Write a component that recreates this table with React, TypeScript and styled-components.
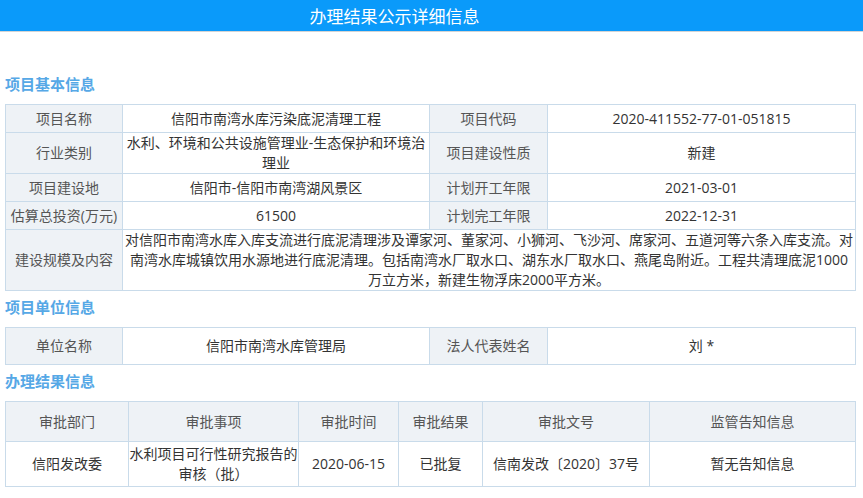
import React from "react";
import styled, { createGlobalStyle } from "styled-components";

const Global = createGlobalStyle`
  html, body { margin: 0; padding: 0; background: #fff; }
  body { font-family: "Open Sans", "Noto Sans CJK SC", sans-serif; }
`;

const Page = styled.div`
  width: 863px;
  overflow: hidden;
`;

const TopBar = styled.div`
  height: 31px;
  background: #0a9afa;
  border-bottom: 1px solid #d4d4d4;
  display: flex;
  align-items: center;
  justify-content: center;
  padding-right: 74px;
  color: #fff;
  font-family: "Noto Sans CJK SC", sans-serif;
  font-size: 17px;
  line-height: 31px;
`;

const Content = styled.div`
  padding: 42px 0 0 5px;
`;

const SectionTitle = styled.div<{ $first?: boolean }>`
  height: 20px;
  line-height: 20px;
  font-family: "Noto Sans CJK SC", sans-serif;
  font-size: 15px;
  font-weight: bold;
  color: #56a8e6;
  margin: ${(p) => (p.$first ? "0" : "6px")} 0 10px 0;
`;

const Table = styled.table`
  width: 850px;
  border-collapse: collapse;
  table-layout: fixed;
  font-size: 14px;
  line-height: 20px;
`;

const Cell = styled.td<{ $label?: boolean; $h?: number; $pad?: number }>`
  border: 1px solid #c9dbea;
  background: ${(p) => (p.$label ? "#eef2f6" : "#fff")};
  color: ${(p) => (p.$label ? "#555" : "#333")};
  text-align: center;
  vertical-align: middle;
  height: ${(p) => p.$h ?? 28}px;
  padding: ${(p) => p.$pad ?? 0}px 1px;
  box-sizing: border-box;
`;

const HeadCell = styled(Cell).attrs({ as: "th" })`
  font-weight: normal;
  padding: 0;
`;

const ResultCell = styled(Cell)`
  padding: 2px 0;
`;

const basicRows: [string, string, string, string][] = [
  ["项目名称", "信阳市南湾水库污染底泥清理工程", "项目代码", "2020-411552-77-01-051815"],
  ["行业类别", "水利、环境和公共设施管理业-生态保护和环境治理业", "项目建设性质", "新建"],
  ["项目建设地", "信阳市-信阳市南湾湖风景区", "计划开工年限", "2021-03-01"],
  ["估算总投资(万元)", "61500", "计划完工年限", "2022-12-31"],
];

const resultHead = ["审批部门", "审批事项", "审批时间", "审批结果", "审批文号", "监管告知信息"];
const resultRow = ["信阳发改委", "水利项目可行性研究报告的审核（批）", "2020-06-15", "已批复", "信南发改〔2020〕37号", "暂无告知信息"];
const resultCols = [123, 170, 100, 84, 167, 206];
const infoCols = [117, 307, 118, 308];

export default function App() {
  return (
    <Page>
      <Global />
      <TopBar>办理结果公示详细信息</TopBar>
      <Content>
        <SectionTitle $first>项目基本信息</SectionTitle>
        <Table>
          <colgroup>
            {infoCols.map((w, i) => (
              <col key={i} style={{ width: w }} />
            ))}
          </colgroup>
          <tbody>
            {basicRows.map((r) => (
              <tr key={r[0]}>
                <Cell $label>{r[0]}</Cell>
                <Cell>{r[1]}</Cell>
                <Cell $label>{r[2]}</Cell>
                <Cell>{r[3]}</Cell>
              </tr>
            ))}
            <tr>
              <Cell $label>建设规模及内容</Cell>
              <Cell colSpan={3}>
                对信阳市南湾水库入库支流进行底泥清理涉及谭家河、董家河、小狮河、飞沙河、席家河、五道河等六条入库支流。对南湾水库城镇饮用水源地进行底泥清理。包括南湾水厂取水口、湖东水厂取水口、燕尾岛附近。工程共清理底泥1000万立方米，新建生物浮床2000平方米。
              </Cell>
            </tr>
          </tbody>
        </Table>

        <SectionTitle>项目单位信息</SectionTitle>
        <Table>
          <colgroup>
            {infoCols.map((w, i) => (
              <col key={i} style={{ width: w }} />
            ))}
          </colgroup>
          <tbody>
            <tr>
              <Cell $label $h={37}>单位名称</Cell>
              <Cell $h={37}>信阳市南湾水库管理局</Cell>
              <Cell $label $h={37}>法人代表姓名</Cell>
              <Cell $h={37}>刘 *</Cell>
            </tr>
          </tbody>
        </Table>

        <SectionTitle>办理结果信息</SectionTitle>
        <Table>
          <colgroup>
            {resultCols.map((w, i) => (
              <col key={i} style={{ width: w }} />
            ))}
          </colgroup>
          <thead>
            <tr>
              {resultHead.map((h) => (
                <HeadCell key={h} $label $h={40}>
                  {h}
                </HeadCell>
              ))}
            </tr>
          </thead>
          <tbody>
            <tr>
              {resultRow.map((c, i) => (
                <ResultCell key={i} $h={44}>
                  {c}
                </ResultCell>
              ))}
            </tr>
          </tbody>
        </Table>
      </Content>
    </Page>
  );
}
